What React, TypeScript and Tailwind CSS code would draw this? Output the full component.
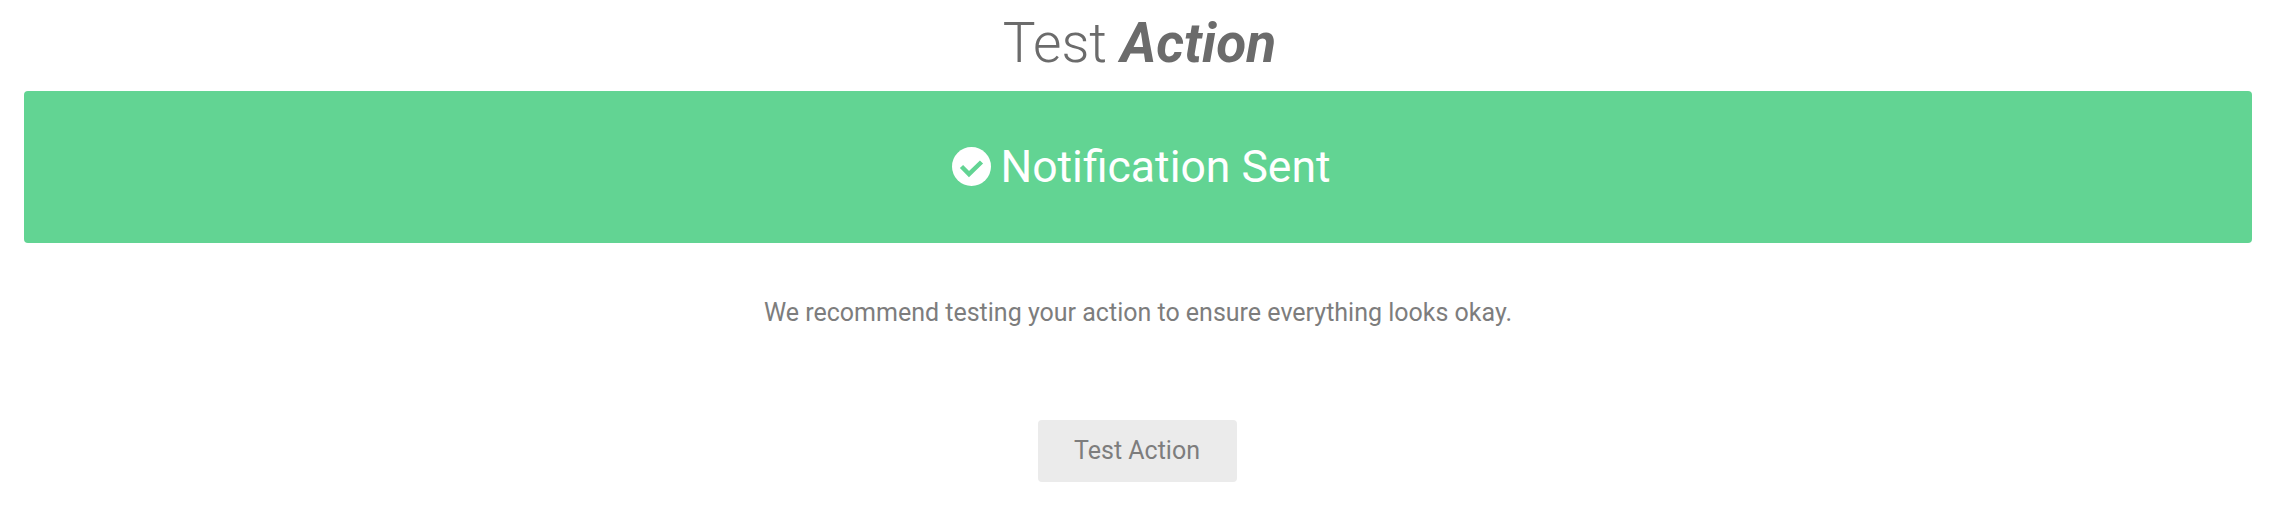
export default function App() {
  return (
    <div className="w-[2276px] h-[506px] overflow-hidden bg-white px-6 font-['Roboto',sans-serif] flex flex-col items-center">
      <h1 className="h-[90px] pt-[10px] pl-[3px] text-[55px] leading-[66px] font-light text-[#6b6b6b]">
        Test <em className="font-bold italic">Action</em>
      </h1>
      <div className="w-full h-[152px] mt-[1px] pl-[7px] rounded-[4px] bg-[#62d493] flex items-center justify-center gap-[9px] text-white">
        <svg viewBox="0 0 39 39" className="w-[39px] h-[39px] -mt-[1px]">
          <circle cx="19.5" cy="19.5" r="19.5" fill="#ffffff" />
          <polyline
            points="9.5,19.5 17,27 29.5,15"
            fill="none"
            stroke="#62d493"
            strokeWidth="4.5"
          />
        </svg>
        <span className="text-[44.5px] leading-none font-normal">Notification Sent</span>
      </div>
      <p className="mt-[56px] text-[25px] leading-[28px] text-[#7d7d7d]">
        We recommend testing your action to ensure everything looks okay.
      </p>
      <button className="mt-[93px] -ml-[2px] w-[199px] h-[62px] rounded-[4px] bg-[#ebebeb] text-[25px] text-[#7d7d7d]">
        Test Action
      </button>
    </div>
  );
}
